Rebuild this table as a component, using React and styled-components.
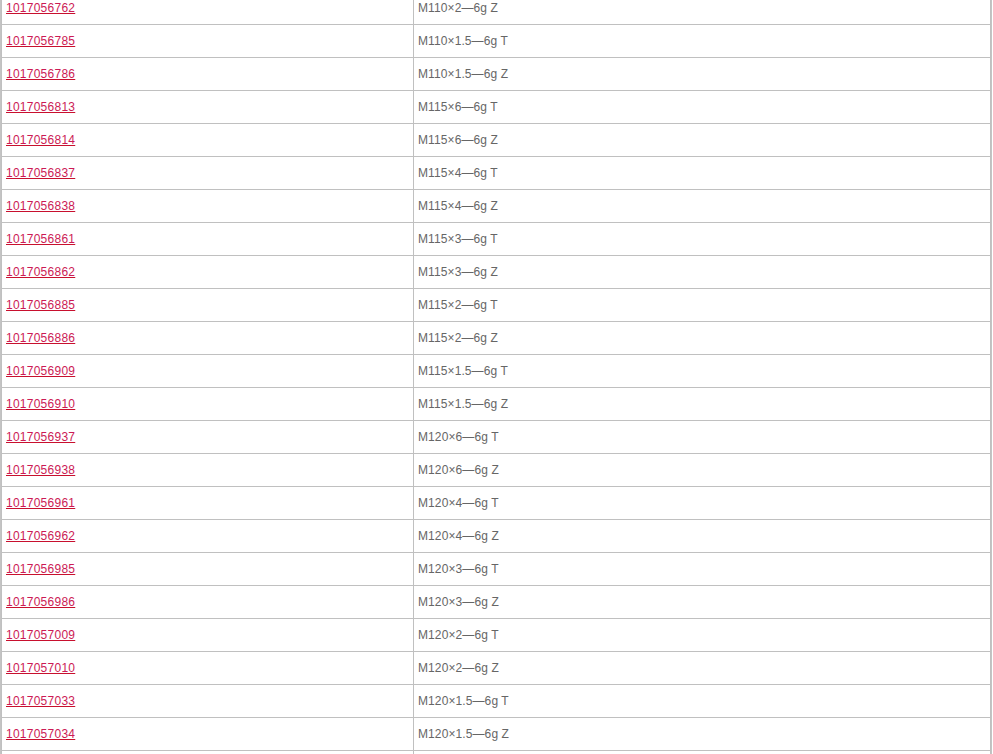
import React from "react";
import styled, { createGlobalStyle } from "styled-components";

const GlobalStyle = createGlobalStyle`
  html, body {
    margin: 0;
    padding: 0;
    background: #fff;
    overflow: hidden;
    font-family: "Liberation Sans", Arial, sans-serif;
  }
`;

const Viewport = styled.div`
  height: 754px;
  overflow: hidden;
`;

const Table = styled.table`
  width: 992px;
  margin-top: -8px;
  border-collapse: separate;
  border-spacing: 0;
  border-left: 1px solid #c4c4c4;
  border-right: 1px solid #c4c4c4;
  table-layout: fixed;
  font-size: 12px;
`;

const Cell = styled.td`
  height: 32px;
  padding: 0 4px;
  vertical-align: middle;
  border-right: 1px solid #c0c0c0;
  border-bottom: 1px solid #c0c0c0;
  color: #666;
  white-space: nowrap;
  letter-spacing: 0.1px;

  &:first-child {
    width: 403px;
    border-left: 1px solid #c0c0c0;
  }
`;

const Code = styled.a`
  color: #cc1a55;
  letter-spacing: 0.25px;
  text-decoration: underline;
  text-decoration-color: #c8102e;
`;

const rows = [
  ["1017056762", "M110×2—6g Z"],
  ["1017056785", "M110×1.5—6g T"],
  ["1017056786", "M110×1.5—6g Z"],
  ["1017056813", "M115×6—6g T"],
  ["1017056814", "M115×6—6g Z"],
  ["1017056837", "M115×4—6g T"],
  ["1017056838", "M115×4—6g Z"],
  ["1017056861", "M115×3—6g T"],
  ["1017056862", "M115×3—6g Z"],
  ["1017056885", "M115×2—6g T"],
  ["1017056886", "M115×2—6g Z"],
  ["1017056909", "M115×1.5—6g T"],
  ["1017056910", "M115×1.5—6g Z"],
  ["1017056937", "M120×6—6g T"],
  ["1017056938", "M120×6—6g Z"],
  ["1017056961", "M120×4—6g T"],
  ["1017056962", "M120×4—6g Z"],
  ["1017056985", "M120×3—6g T"],
  ["1017056986", "M120×3—6g Z"],
  ["1017057009", "M120×2—6g T"],
  ["1017057010", "M120×2—6g Z"],
  ["1017057033", "M120×1.5—6g T"],
  ["1017057034", "M120×1.5—6g Z"],
];

export default function App() {
  return (
    <Viewport>
      <GlobalStyle />
      <Table>
        <tbody>
          {rows.map(([code, spec]) => (
            <tr key={code}>
              <Cell>
                <Code href="#">{code}</Code>
              </Cell>
              <Cell>{spec}</Cell>
            </tr>
          ))}
          <tr>
            <Cell />
            <Cell />
          </tr>
        </tbody>
      </Table>
    </Viewport>
  );
}
